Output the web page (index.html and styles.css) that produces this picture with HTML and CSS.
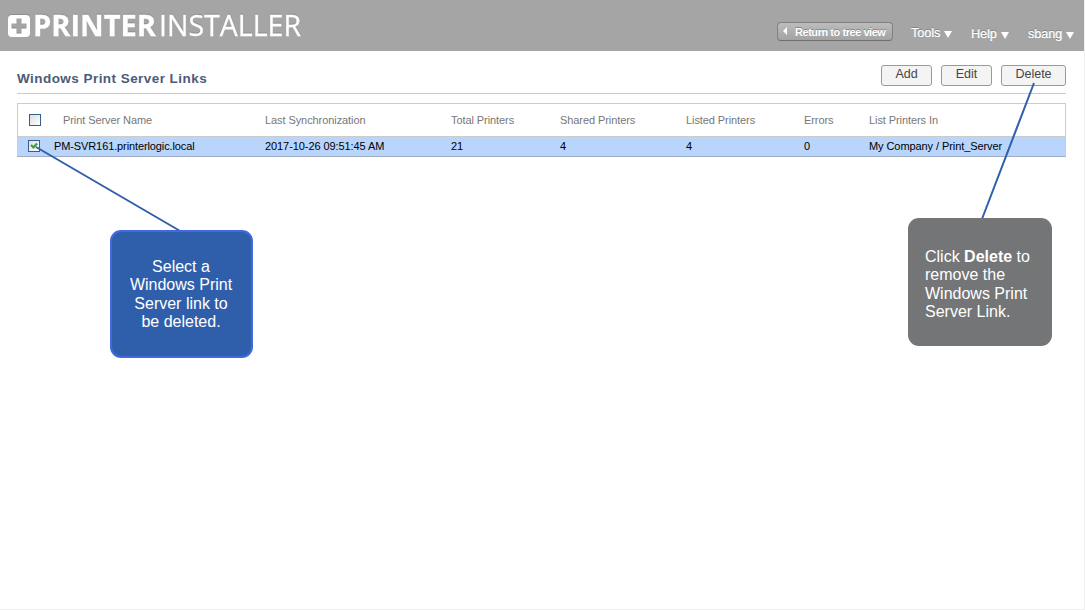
FILE: index.html
```html
<!DOCTYPE html>
<html lang="en">
<head>
<meta charset="utf-8">
<title>Printer Installer</title>
<link rel="stylesheet" href="styles.css">
</head>
<body>
<div class="page">
  <header class="topbar">
    <svg class="logo" width="300" height="40" viewBox="0 0 300 40" role="img" aria-label="Printer Installer">
      <path fill="#fff" fill-rule="evenodd" d="M12 10H26Q30 10 30 14V28Q30 32 26 32H12Q8 32 8 28V14Q8 10 12 10ZM16.500 13.500V18.500H11.500V23.500H16.500V28.500H21.500V23.500H26.500V18.500H21.500V13.500Z"/>
      <text class="logo-bold" x="33" y="31" textLength="123" lengthAdjust="spacingAndGlyphs">PRINTER</text>
      <text class="logo-light" x="159" y="31" textLength="142" lengthAdjust="spacingAndGlyphs">INSTALLER</text>
    </svg>
    <nav class="menu">
      <a class="return"><i class="arrow"></i><span>Return to tree view</span></a>
      <a class="item tools">Tools <i class="caret"></i></a>
      <a class="item help">Help <i class="caret"></i></a>
      <a class="item user">sbang <i class="caret"></i></a>
    </nav>
  </header>
  <main class="content">
    <div class="heading">
      <h1>Windows Print Server Links</h1>
      <div class="actions">
        <button class="btn">Add</button>
        <button class="btn">Edit</button>
        <button class="btn wide">Delete</button>
      </div>
    </div>
    <div class="table">
      <div class="row head">
        <span><i class="check"></i></span><span class="name">Print Server Name</span><span>Last Synchronization</span><span>Total Printers</span><span>Shared Printers</span><span>Listed Printers</span><span>Errors</span><span>List Printers In</span>
      </div>
      <div class="row selected">
        <span><i class="check"><svg width="10" height="10" viewBox="0 0 10 10"><path d="M2 4L4.500 6.500L8 2.500" fill="none" stroke="#2fa334" stroke-width="2.200"/></svg></i></span><span class="host">PM-SVR161.printerlogic.local</span><span>2017-10-26 09:51:45 AM</span><span>21</span><span>4</span><span>4</span><span>0</span><span>My Company / Print_Server</span>
      </div>
    </div>
  </main>
  <svg class="pointers" width="1085" height="610" viewBox="0 0 1085 610">
    <path d="M36 147L181 231.500M1034 83L982 219"/>
  </svg>
  <div class="callout blue">Select a<br>Windows Print<br>Server link to<br>be deleted.</div>
  <div class="callout gray">Click <b>Delete</b> to<br>remove the<br>Windows Print<br>Server Link.</div>
</div>
</body>
</html>
```
FILE: styles.css
```css
* { box-sizing: border-box; }
body { margin: 0; background: #fff; font-family: "Liberation Sans", Arial, sans-serif; }
.page { position: relative; width: 1085px; height: 610px; overflow: hidden; border-right: 1px solid #f0f0f0; border-bottom: 1px solid #f0f0f0; }
.topbar { display: flex; justify-content: space-between; height: 51px; background: #a5a5a5; }
.logo { display: block; flex: none; margin-top: 5px; width: 300px; height: 40px; overflow: visible; filter: drop-shadow(0 -1px 0 rgba(0,0,0,.14)); }
.logo text { fill: #fff; font-family: "Open Sans", "Noto Sans", sans-serif; font-size: 29px; }
.logo .logo-bold { font-weight: 700; stroke: #fff; stroke-width: .3; }
.logo .logo-light { font-weight: 400; stroke: #fff; stroke-width: .3; }
.menu { display: flex; align-items: flex-start; padding-right: 10px; color: #fff; }
.return { display: flex; align-items: center; width: 116px; height: 19px; margin: 22px 18px 0 0; padding-left: 5px; border: 1px solid #818181; border-bottom-color: #6f6f6f; border-radius: 4px; background: linear-gradient(#bdbdbd, #a2a2a2); font-size: 11px; font-weight: 700; letter-spacing: -.45px; white-space: nowrap; text-shadow: 0 -1px 0 #858585; }
.arrow { width: 4px; margin: -2px 8px 0 0; border: 4px solid transparent; border-right-color: #fff; border-left: 0; }
.item { display: flex; align-items: center; font-size: 12.500px; line-height: 15px; text-shadow: 0 -1px 0 #858585, .3px 0 0 #fff; }
.tools { width: 60px; margin-top: 26px; }
.help { width: 57px; margin-top: 27px; }
.user { width: 46px; margin-top: 27px; }
.caret { flex: none; margin: 1px 0 0 4px; border: 4px solid transparent; border-top: 7px solid #fff; border-bottom: 0; }
.content { padding: 0 18px 0 17px; }
.heading { display: flex; justify-content: space-between; align-items: flex-start; height: 43px; border-bottom: 1px solid #ccc; }
h1 { margin: 20px 0 0; color: #4c5b79; font-size: 13.500px; line-height: 16px; letter-spacing: .45px; }
.actions { display: flex; gap: 9px; padding-top: 14px; }
.btn { width: 51px; height: 21px; padding: 0 0 2px; border: 1px solid #999; border-radius: 3px; background: #f4f4f4; color: #444; font: 12.500px/17px "Liberation Sans", Arial, sans-serif; }
.wide { width: 65px; }
.table { margin-top: 9px; border: 1px solid #ccc; border-bottom-color: #a0acc4; font-size: 11px; }
.row { display: grid; grid-template-columns: 36px 211px 186px 109px 126px 118px 65px 1fr; align-items: center; white-space: nowrap; letter-spacing: -.08px; }
.head { height: 33px; border-bottom: 1px solid #ccc; color: #777; }
.head .name { padding-left: 9px; }
.selected { height: 19px; padding-bottom: 1px; background: #bad5fb; color: #000; }
.host { letter-spacing: -.11px; }
.check { display: block; width: 12px; height: 12px; margin-left: 11px; border: 1px solid #34608c; background: linear-gradient(135deg, #ddd, #fff); }
.selected .check { margin-left: 10px; }
.check svg { display: block; }
.pointers { position: absolute; left: 0; top: 0; fill: none; stroke: #305fab; stroke-width: 2; }
.callout { position: absolute; border-radius: 11px; color: #fff; font-size: 16px; line-height: 18.300px; white-space: nowrap; }
.blue { left: 110px; top: 230px; width: 143px; height: 128px; padding: 26px 1px 0 0; border: 2px solid #4169e1; background: #2f5fab; text-align: center; }
.gray { left: 908px; top: 218px; width: 144px; height: 128px; padding: 30px 0 0 17px; background: #747577; }
```
